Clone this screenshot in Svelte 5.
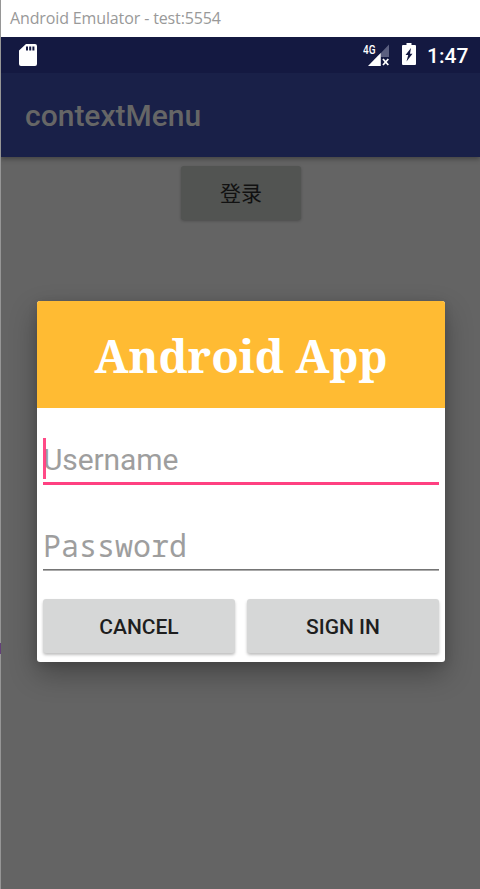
<script>
  let username = $state('');
  let password = $state('');
</script>

<div class="window">
  <div class="edge"></div>
  <div class="emulator">
    <header class="titlebar"><span>Android Emulator - test:5554</span></header>

    <div class="screen">
      <div class="statusbar">
        <svg class="sd" width="18" height="22" viewBox="0 0 18 22">
          <path fill="#fff" fill-rule="evenodd" d="M7 0H16Q18 0 18 2V20Q18 22 16 22H2Q0 22 0 20V6.600ZM7 2.500V6.500H9V2.500ZM10.200 2.500V6.500H12.200V2.500ZM13.400 2.500V6.500H15.400V2.500Z" />
        </svg>
        <svg class="signal" width="28" height="24" viewBox="0 0 28 24">
          <text x="0" y="10.500" textLength="12.500" lengthAdjust="spacingAndGlyphs">4G</text>
          <path fill="#5b5f80" d="M26 1.500V14H18V23H5.500Z" />
          <path fill="#fff" d="M17.700 10V23H5Z" />
          <path stroke="#fff" stroke-width="1.800" d="M20 16L25.300 22M25.300 16L20 22" />
        </svg>
        <svg class="battery" width="14" height="22" viewBox="0 0 14 22">
          <path fill="#fff" fill-rule="evenodd" d="M4.500 0H9.500V2H13Q14 2 14 3V21Q14 22 13 22H1Q0 22 0 21V3Q0 2 1 2H4.500ZM9 5L3.500 12H6.200L4.500 18.500L10.500 10.800H8Z" />
        </svg>
        <span class="clock">1:47</span>
      </div>

      <div class="appbar"><h1>contextMenu</h1></div>

      <main>
        <button class="login">登录</button>

        <form class="dialog">
          <div class="banner"><h2>Android App</h2></div>
          <div class="field active">
            <input placeholder="Username" aria-label="Username" bind:value={username} />
            <i class="caret"></i>
          </div>
          <div class="field password">
            <input type="password" placeholder="Password" aria-label="Password" bind:value={password} />
          </div>
          <div class="actions">
            <button type="button">CANCEL</button>
            <button type="button">SIGN IN</button>
          </div>
        </form>
      </main>
    </div>
  </div>
</div>

<style>
  .window {
    display: flex;
    width: 480px;
    height: 889px;
    overflow: hidden;
    font-family: Roboto, "Noto Sans CJK SC", sans-serif;
  }
  .edge {
    width: 1px;
    background: linear-gradient(#969696 0 643px, #633f78 643px 654px, #969696 654px);
  }
  .emulator { flex: 1; display: flex; flex-direction: column; }
  .titlebar {
    height: 37px;
    box-sizing: border-box;
    padding: 6px 0 0 9px;
    background: #fff;
    color: #999;
    font: 16px/24px "Open Sans", "Noto Sans", sans-serif;
    letter-spacing: -0.13px;
    white-space: nowrap;
  }
  .screen { flex: 1; display: flex; flex-direction: column; background: #646464; }
  .statusbar {
    height: 36px;
    display: flex;
    background: #141941;
    color: #fff;
  }
  .sd { margin: 7px 0 0 18px; }
  .signal { margin: 6px 0 0 326px; }
  .signal text { font: 500 12px Roboto, sans-serif; fill: #fff; }
  .battery { margin: 6px 0 0 11px; }
  .clock { margin: 6px 0 0 11px; font-size: 21px; line-height: 26px; font-weight: 500; white-space: nowrap; }
  .appbar {
    height: 84px;
    box-sizing: border-box;
    padding: 25px 0 0 24px;
    background: #192048;
    box-shadow: 0 2px 5px rgba(0, 0, 0, .35);
    clip-path: inset(0 0 -10px 0);
  }
  h1 { margin: 0; color: #666; font-size: 30px; line-height: 35px; font-weight: 500; }
  main { display: flex; flex-direction: column; align-items: center; }
  button {
    padding: 0;
    border: 0;
    border-radius: 3px;
    font-family: inherit;
  }
  .login {
    width: 120px;
    height: 54px;
    margin: 9px 0 0 1px;
    padding-bottom: 2px;
    background: #525452;
    color: #111;
    font-size: 21px;
    font-weight: 400;
    box-shadow: 0 1px 3px rgba(0, 0, 0, .25);
  }
  .dialog {
    width: 408px;
    height: 361px;
    margin-top: 81px;
    margin-left: 1px;
    background: #fff;
    border-radius: 3px;
    box-shadow: 0 12px 28px rgba(0, 0, 0, .3), 0 2px 10px rgba(0, 0, 0, .12);
  }
  .banner {
    height: 107px;
    display: flex;
    justify-content: center;
    background: #ffbb33;
    border-radius: 3px 3px 0 0;
  }
  h2 {
    margin: 25px 0 0;
    color: #fff;
    font: bold 45px/60px "Noto Serif", "Droid Serif", "DejaVu Serif", serif;
    white-space: nowrap;
  }
  .field {
    position: relative;
    height: 40px;
    margin: 30px 6px 0;
    padding-bottom: 5px;
  }
  .field.active { height: 44px; padding-bottom: 0; border-bottom: 3px solid #ff4081; }
  .field.password {
    margin-top: 39px;
    padding-bottom: 7px;
    background: linear-gradient(#757575 0 0) 0 45px / 100% 1px no-repeat, linear-gradient(#aaa 0 0) 0 46px / 100% 1px no-repeat;
  }
  input {
    width: 100%;
    height: 43px;
    padding: 0;
    border: 0;
    outline: 0;
    background: none;
    font: 30px Roboto, sans-serif;
    letter-spacing: -0.1px;
  }
  input::placeholder { color: #9e9e9e; opacity: 1; }
  .password input { font-family: "Noto Sans Mono", "DejaVu Sans Mono", monospace; letter-spacing: 0; }
  .caret { position: absolute; left: 0; top: 0; width: 3px; height: 41px; background: rgba(255, 64, 129, .95); }
  .actions { display: flex; gap: 12px; margin: 28px 6px 0; }
  .actions button {
    flex: 1;
    height: 54px;
    padding-top: 1px;
    background: #d6d7d7;
    color: #1e1e1e;
    font-size: 21px;
    font-weight: 500;
    box-shadow: 0 2px 3px rgba(0, 0, 0, .25);
  }
</style>
